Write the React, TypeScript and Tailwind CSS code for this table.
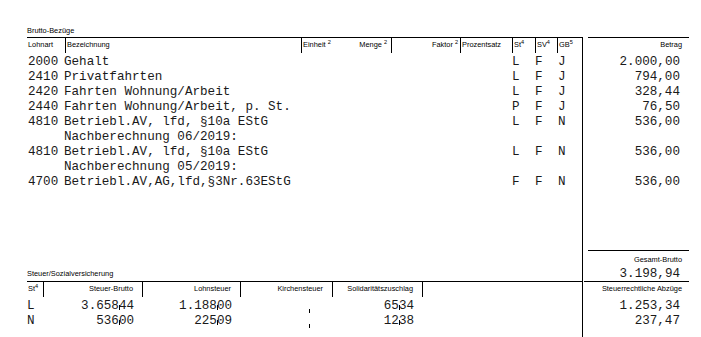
const sans = "font-['Liberation_Sans',Arial,sans-serif] text-[7.4px] leading-[9px] text-black";
const mono = "font-['Liberation_Mono','Courier_New',monospace] text-[12.6px] leading-[15px] pt-[2px] text-[#1a1a1a] whitespace-pre";

const rows = [
  { la: "2000", text: "Gehalt", st: "L", sv: "F", gb: "J", betrag: "2.000,00" },
  { la: "2410", text: "Privatfahrten", st: "L", sv: "F", gb: "J", betrag: "794,00" },
  { la: "2420", text: "Fahrten Wohnung/Arbeit", st: "L", sv: "F", gb: "J", betrag: "328,44" },
  { la: "2440", text: "Fahrten Wohnung/Arbeit, p. St.", st: "P", sv: "F", gb: "J", betrag: "76,50" },
  { la: "4810", text: "Betriebl.AV, lfd, §10a EStG", st: "L", sv: "F", gb: "N", betrag: "536,00" },
  { la: "", text: "Nachberechnung 06/2019:", st: "", sv: "", gb: "", betrag: "" },
  { la: "4810", text: "Betriebl.AV, lfd, §10a EStG", st: "L", sv: "F", gb: "N", betrag: "536,00" },
  { la: "", text: "Nachberechnung 05/2019:", st: "", sv: "", gb: "", betrag: "" },
  { la: "4700", text: "Betriebl.AV,AG,lfd,§3Nr.63EStG", st: "F", sv: "F", gb: "N", betrag: "536,00" },
];

const steuer = [
  { st: "L", brutto: "3.65844", lst: "1.18800", soli: "6534", abzug: "1.253,34" },
  { st: "N", brutto: "53600", lst: "22509", soli: "1238", abzug: "237,47" },
];

// Dezimaltrenner als kleiner Strich zwischen den Ziffern
function Dec({ v, low }: { v: string; low?: boolean }) {
  const a = v.slice(0, -2);
  const b = v.slice(-2);
  return (
    <>
      {a}
      <span
        className={
          low
            ? "inline-block w-px h-[4px] bg-black -mr-px align-[-4px]"
            : "inline-block w-px h-[5px] bg-black -mr-px align-[-1px]"
        }
      />
      {b}
    </>
  );
}

export default function App() {
  return (
    <div className="w-[701px] h-[337px] bg-white pl-[27px] pt-[25px] overflow-hidden">
      <div className={`${sans} h-[12px] pt-px`}>Brutto-Bezüge</div>

      {/* Brutto-Bezüge Tabelle */}
      <div className="flex h-[244px]">
        <div className="w-[556px] border-t border-r border-black flex flex-col">
          <div className={`${sans} flex h-[15px]`}>
            <div className="w-[38px] pl-px pt-[2px]">Lohnart</div>
            <div className="w-[236px] border-l border-black pl-px pt-[2px]">Bezeichnung</div>
            <div className="w-[90px] border-l border-black pl-px pr-[4px] pt-[2px] flex justify-between">
              <span>Einheit <sup>2</sup></span>
              <span>Menge <sup>2</sup></span>
            </div>
            <div className="w-[69px] border-l border-black pr-[2px] pt-[2px] text-right">
              Faktor <sup>2</sup>
            </div>
            <div className="w-[52px] border-l border-black pl-px pt-[2px]">Prozentsatz</div>
            <div className="w-[23px] border-l border-black pl-px pt-[2px]">St<sup>4</sup></div>
            <div className="w-[22px] border-l border-black pl-px pt-[2px]">SV<sup>4</sup></div>
            <div className="w-[25px] border-l border-black pl-px pt-[2px]">GB<sup>5</sup></div>
          </div>
          {rows.map((r, i) => (
            <div key={i} className={`${mono} flex h-[15px]`}>
              <div className="w-[37px] pl-px">{r.la}</div>
              <div className="w-[448px]">{r.text}</div>
              <div className="w-[23px]">{r.st}</div>
              <div className="w-[22px]">{r.sv}</div>
              <div className="w-[25px] pl-px">{r.gb}</div>
            </div>
          ))}
          <div className={`${sans} mt-auto pb-[3px]`}>Steuer/Sozialversicherung</div>
        </div>

        <div className="ml-[5px] w-[101px] border-t border-black flex flex-col">
          <div className={`${sans} h-[15px] pt-[2px] pr-[7px] text-right`}>Betrag</div>
          {rows.map((r, i) => (
            <div key={i} className={`${mono} h-[15px] pr-[9px] text-right`}>
              {r.betrag}
            </div>
          ))}
          <div className="mt-auto h-[31px] border-t border-black">
            <div className={`${sans} h-[14px] pt-[4px] pr-[7px] text-right`}>Gesamt-Brutto</div>
            <div className={`${mono} h-[15px] pr-[9px] text-right`}>3.198,94</div>
          </div>
        </div>
      </div>

      {/* Steuer/Sozialversicherung Tabelle */}
      <div className="flex h-[56px]">
        <div className="w-[556px] border-t border-r border-black">
          <div className={`${sans} flex h-[15px]`}>
            <div className="w-[16px] pl-px pt-[2px]">St<sup>4</sup></div>
            <div className="w-[99px] border-l border-black pr-[9px] pt-[2px] text-right">Steuer-Brutto</div>
            <div className="w-[98px] border-l border-black pr-[9px] pt-[2px] text-right">Lohnsteuer</div>
            <div className="w-[92px] border-l border-black pr-[9px] pt-[2px] text-right">Kirchensteuer</div>
            <div className="w-[90px] border-l border-black pr-[9px] pt-[2px] text-right">
              Solidaritätszuschlag
            </div>
            <div className="flex-1 border-l border-black" />
          </div>
          {steuer.map((s) => (
            <div key={s.st} className={`${mono} flex h-[15px]`}>
              <div className="w-[16px]">{s.st}</div>
              <div className="w-[99px] pr-[8px] text-right">
                <Dec v={s.brutto} />
              </div>
              <div className="w-[98px] pr-[8px] text-right">
                <Dec v={s.lst} />
              </div>
              <div className="w-[92px] pr-[8px] text-right">
                <Dec v="  " low />
              </div>
              <div className="w-[90px] pr-[8px] text-right">
                <Dec v={s.soli} />
              </div>
            </div>
          ))}
        </div>

        <div className="ml-px w-[105px] border-t border-black">
          <div className={`${sans} h-[15px] pt-[2px] pr-[7px] text-right`}>Steuerrechtliche Abzüge</div>
          {steuer.map((s) => (
            <div key={s.st} className={`${mono} h-[15px] pr-[9px] text-right`}>
              {s.abzug}
            </div>
          ))}
        </div>
      </div>
    </div>
  );
}
